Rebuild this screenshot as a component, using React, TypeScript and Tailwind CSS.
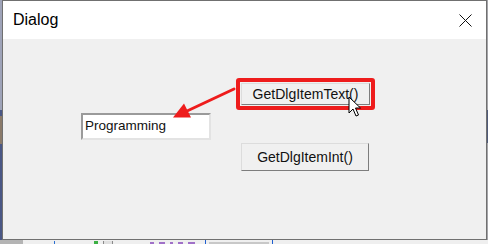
function ClassicButton({ label, className }: { label: string; className: string }) {
  return (
    <div
      className={`flex items-center justify-center bg-[#f0f0f0] border border-t-[#dcdcdc] border-l-[#dcdcdc] border-b-[#7d7d7d] border-r-[#7d7d7d] text-[14px] text-[#111] ${className}`}
      style={{ fontFamily: '"Liberation Sans", Arial, sans-serif' }}
    >
      {label}
    </div>
  )
}

function Cursor() {
  return (
    <svg width="14" height="22" viewBox="0 0 14 22" className="absolute left-[348px] top-[96px]">
      <path
        d="M1 1 L1 17 L5 13 L8 20 L10.5 19 L7.5 12 L12.5 12 Z"
        fill="#fff"
        stroke="#000"
        strokeWidth="1"
        strokeLinejoin="miter"
      />
    </svg>
  )
}

function Arrow() {
  return (
    <svg width="488" height="244" className="absolute left-0 top-0 pointer-events-none">
      <line x1="234" y1="89" x2="186" y2="111.5" stroke="#ee1c1c" strokeWidth="3" strokeLinecap="round" />
      <polygon points="173,117.5 191,117.5 184,103.5" fill="#ee1c1c" />
    </svg>
  )
}

export default function App() {
  return (
    <div className="relative w-[488px] h-[244px] overflow-hidden bg-[#ececec]">
      <div className="flex h-[240px]">
        {/* what's behind the dialog, left side */}
        <div className="w-[2px] flex flex-col">
          <div className="h-[110px] bg-[#9ea3b8]" />
          <div className="h-[6px] bg-[#4a5785]" />
          <div className="h-[28px] bg-[#8a7a6a]" />
          <div className="flex-1 bg-[#4a5785]" />
        </div>

        <div className="w-[485px] flex flex-col border border-[#707070]">
          <div className="h-[38px] bg-white flex items-center justify-between pl-[10px] pr-[14px]">
            <span
              className="text-[16px] text-black"
              style={{ fontFamily: '"Liberation Sans", Arial, sans-serif' }}
            >
              Dialog
            </span>
            <svg width="13" height="13" viewBox="0 0 13 13">
              <path d="M0.5 0.5 L12.5 12.5 M12.5 0.5 L0.5 12.5" stroke="#111" strokeWidth="1" />
            </svg>
          </div>

          <div className="flex-1 bg-[#f0f0f0] flex">
            <div
              className="ml-[78px] mt-[74px] w-[130px] h-[27px] bg-white border-2 border-t-[#9a9a9a] border-l-[#9a9a9a] border-b-[#e3e3e3] border-r-[#e3e3e3] flex items-center pl-[2px] text-[13.5px] text-[#111]"
              style={{ fontFamily: '"Liberation Sans", Arial, sans-serif' }}
            >
              Programming
            </div>

            <div className="ml-[25px] mt-[39px] flex flex-col">
              <div className="w-[139px] h-[32px] border-4 border-[#ee1c1c] rounded-[3px] p-[1px]">
                <ClassicButton label="GetDlgItemText()" className="w-full h-full" />
              </div>
              <ClassicButton label="GetDlgItemInt()" className="ml-[5px] mt-[33px] w-[128px] h-[28px]" />
            </div>
          </div>
        </div>

        {/* right edge of what's behind */}
        <div className="w-[1px] flex flex-col">
          <div className="h-[110px] bg-[#a4a4a8]" />
          <div className="h-[33px] bg-[#4f5a78]" />
          <div className="flex-1 bg-[#a4a4a8]" />
        </div>
      </div>

      {/* code editor peeking out below the dialog */}
      <div className="h-[4px] flex items-end bg-[#efefef] overflow-hidden">
        <div className="w-[23px] h-full bg-[#b4b4b4]" />
        <div className="ml-[31px] w-[1px] h-[3px] bg-[#2a6fd0]" />
        <div className="ml-[39px] w-[4px] h-[3px] bg-[#3cb043]" />
        <div className="ml-[5px] w-[10px] h-[3px] border-x border-[#8a8a8a] bg-[#e0e0e0]" />
        <div className="ml-[37px] flex gap-[5px] h-[2px]">
          <div className="w-[4px] h-full bg-[#a070c8]" />
          <div className="w-[6px] h-full bg-[#a070c8]" />
          <div className="w-[3px] h-full bg-[#a070c8]" />
          <div className="w-[5px] h-full bg-[#a070c8]" />
          <div className="w-[7px] h-full bg-[#a070c8]" />
        </div>
        <div className="ml-[10px] w-[1px] h-full bg-[#1f5fd0]" />
        <div className="ml-[3px] w-[60px] h-[2px] bg-[#c8c8c8]" />
        <div className="ml-[3px] w-[1px] h-full bg-[#1f5fd0]" />
      </div>

      <Arrow />
      <Cursor />
    </div>
  )
}
